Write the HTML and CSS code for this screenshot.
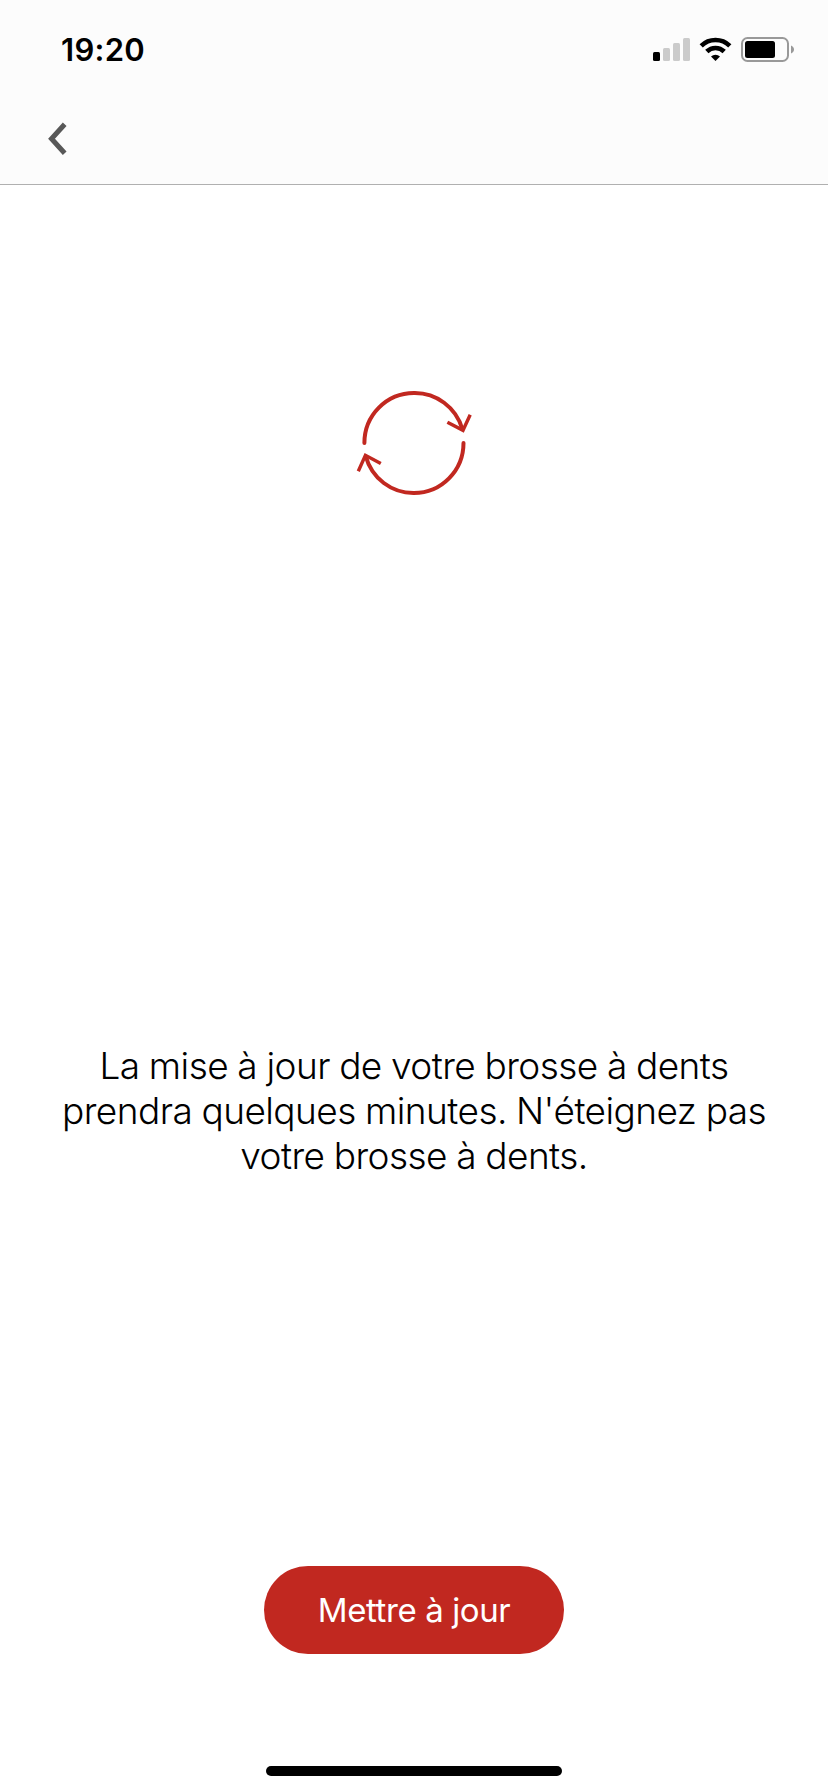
FILE: index.html
```html
<!DOCTYPE html>
<html lang="fr">
<head>
  <meta charset="utf-8">
  <title>Mise à jour</title>
  <link rel="stylesheet" href="styles.css">
</head>
<body>
  <div class="screen">
    <header class="header">
      <div class="status-bar">
        <span class="time">19:20</span>
        <svg class="status-icons" width="170" height="50" viewBox="0 0 170 50">
          <!-- signal -->
          <rect x="13" y="27" width="7" height="9" rx="1.5" fill="#000"/>
          <rect x="23" y="23" width="7" height="13" rx="1.5" fill="#cbcbcb"/>
          <rect x="33" y="18" width="7" height="18" rx="1.5" fill="#cbcbcb"/>
          <rect x="43" y="13" width="7" height="23" rx="1.5" fill="#cbcbcb"/>
          <!-- wifi -->
          <g fill="none" stroke="#000" stroke-width="4.6">
            <path d="M61.2 20.8a20.5 20.5 0 0 1 28.6 0"/>
            <path d="M66.8 26.5a12.4 12.4 0 0 1 17.4 0"/>
          </g>
          <path d="M71 31.6a6.4 6.4 0 0 1 9 0L75.5 36z" fill="#000"/>
          <!-- battery -->
          <rect x="102" y="13" width="46" height="23" rx="5.5" fill="none" stroke="#999" stroke-width="2"/>
          <rect x="105" y="16" width="30" height="17" rx="2.5" fill="#000"/>
          <path d="M151 20.5c4 1.5 4 6.5 0 8z" fill="#999"/>
        </svg>
      </div>
      <a class="back" href="#" aria-label="Retour">
        <svg width="24" height="36" viewBox="0 0 24 36">
          <path d="M19.7 3.2 6.5 17.8 19.7 32.3" fill="none" stroke="#585858" stroke-width="5"/>
        </svg>
      </a>
    </header>

    <main class="content">
      <svg class="sync-icon" width="150" height="135" viewBox="0 0 150 135">
        <path class="arc" d="M24.4 68A49.5 50 0 0 1 73.9 18 49.5 50 0 0 1 122.3 54"/>
        <path class="arc" d="M123.5 68A49.5 50 0 0 1 74 118 49.5 50 0 0 1 25.8 81.5"/>
        <path d="M107.4 47.2 123 55.3 130.2 39.7"/>
        <path d="M40.8 88.6 25.4 80.3 18.3 96.2"/>
      </svg>

      <p class="message">
        <span class="line">La mise à jour de votre brosse à dents</span>
        <span class="line">prendra quelques minutes. N'éteignez pas</span>
        <span class="line">votre brosse à dents.</span>
      </p>

      <button class="update-button">Mettre à jour</button>
    </main>

    <div class="home-indicator"></div>
  </div>
</body>
</html>
```

FILE: styles.css
```css
* {
  box-sizing: border-box;
}

body {
  margin: 0;
  background-color: #fff;
  color: #000;
  font-family: Inter, "Liberation Sans", sans-serif;
}

.screen {
  display: flex;
  flex-direction: column;
  align-items: center;
  width: 828px;
  height: 1792px;
  overflow: hidden;
}

.header {
  width: 100%;
  height: 185px;
  background-color: #fcfcfc;
  border-bottom: 1px solid #b0b0b0;
}

.status-bar {
  display: flex;
  justify-content: space-between;
  height: 100px;
  padding: 25px 18px 0 61px;
}

.time {
  font-size: 31px;
  font-weight: 600;
  line-height: 50px;
  letter-spacing: 0.3px;
}

.back {
  display: block;
  width: 24px;
  height: 36px;
  margin: 21px 0 0 45px;
}

.content {
  display: flex;
  flex-direction: column;
  align-items: center;
  width: 100%;
  padding-top: 190px;
}

.sync-icon {
  margin-left: 2px;
  fill: none;
  stroke: #c12820;
  stroke-width: 3.4;
}

.arc {
  stroke-width: 4;
  stroke-linecap: round;
}

.message {
  display: flex;
  flex-direction: column;
  align-items: center;
  margin: 533px 0 0;
  font-size: 37px;
  font-weight: 300;
  line-height: 45px;
  letter-spacing: -0.55px;
  word-spacing: -0.6px;
}

.line {
  white-space: nowrap;
}

.update-button {
  width: 300px;
  height: 88px;
  margin-top: 388px;
  padding: 0;
  border: none;
  border-radius: 44px;
  background-color: #c12820;
  color: #fff;
  font-family: inherit;
  font-size: 33px;
  font-weight: 400;
  letter-spacing: -0.4px;
}

.home-indicator {
  width: 296px;
  height: 10px;
  margin-top: 112px;
  border-radius: 5px;
  background-color: #000;
}
```
